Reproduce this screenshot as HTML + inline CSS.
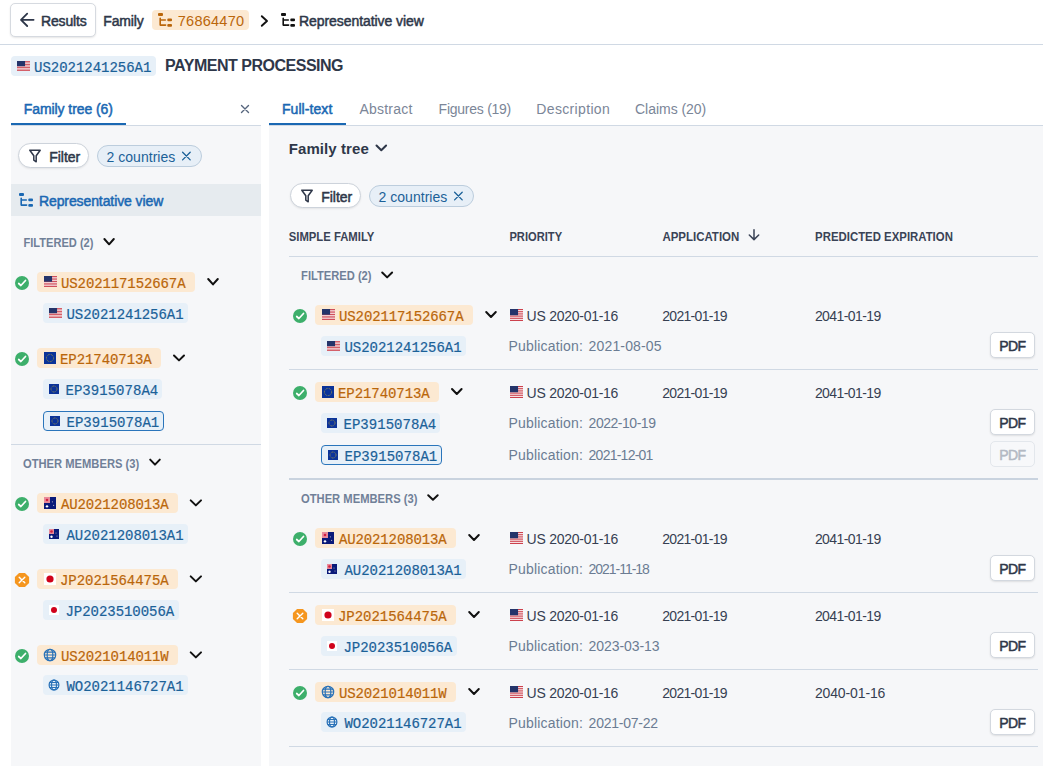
<!DOCTYPE html>
<html><head><meta charset="utf-8"><title>Family tree</title>
<style>
html,body{margin:0;padding:0;background:#fff;width:1043px;height:766px;overflow:hidden;position:relative;font-family:"Liberation Sans",sans-serif}
svg{position:absolute;left:0;top:0}
text{white-space:pre}
</style></head><body>
<div style="position:absolute;left:10px;top:3px;width:86px;height:34px;background:#fff;border-radius:5px;box-sizing:border-box;border:1px solid #d6dae0;box-shadow:0 1px 2px rgba(0,0,0,0.10);"></div>
<div style="position:absolute;left:152px;top:10px;width:97px;height:20px;background:#fce9d2;border-radius:4px;box-sizing:border-box;"></div>
<div style="position:absolute;left:0px;top:44px;width:1043px;height:1px;background:#d0d9e4;border-radius:0px;box-sizing:border-box;"></div>
<div style="position:absolute;left:11px;top:56px;width:145px;height:20px;background:#e7f0f8;border-radius:4px;box-sizing:border-box;"></div>
<div style="position:absolute;left:11px;top:125px;width:250px;height:1px;background:#d0d9e4;border-radius:0px;box-sizing:border-box;"></div>
<div style="position:absolute;left:11px;top:123px;width:115px;height:2px;background:#1a68b3;border-radius:0px;box-sizing:border-box;"></div>
<div style="position:absolute;left:269px;top:125px;width:774px;height:1px;background:#d0d9e4;border-radius:0px;box-sizing:border-box;"></div>
<div style="position:absolute;left:269px;top:123px;width:77px;height:2px;background:#1a68b3;border-radius:0px;box-sizing:border-box;"></div>
<div style="position:absolute;left:11px;top:126px;width:250px;height:640px;background:#f6f7f9;border-radius:0px;box-sizing:border-box;"></div>
<div style="position:absolute;left:18px;top:143px;width:71px;height:25px;background:#fff;border-radius:13px;box-sizing:border-box;border:1px solid #cdd3db;box-shadow:0 1px 2px rgba(0,0,0,0.08);"></div>
<div style="position:absolute;left:97px;top:145px;width:105px;height:22px;background:#e7eff7;border-radius:11px;box-sizing:border-box;border:1px solid #bccddd;"></div>
<div style="position:absolute;left:11px;top:184px;width:250px;height:32px;background:#e6ebef;border-radius:0px;box-sizing:border-box;"></div>
<div style="position:absolute;left:37px;top:272px;width:158px;height:20px;background:#fce9d2;border-radius:4px;box-sizing:border-box;"></div>
<div style="position:absolute;left:43px;top:303px;width:145px;height:20px;background:#e7f0f8;border-radius:4px;box-sizing:border-box;"></div>
<div style="position:absolute;left:37px;top:348px;width:124px;height:20px;background:#fce9d2;border-radius:4px;box-sizing:border-box;"></div>
<div style="position:absolute;left:43px;top:379px;width:119px;height:20px;background:#e7f0f8;border-radius:4px;box-sizing:border-box;"></div>
<div style="position:absolute;left:43px;top:411px;width:121px;height:20px;background:#e7f0f8;border-radius:4px;box-sizing:border-box;border:1px solid #2a75bb;"></div>
<div style="position:absolute;left:11px;top:444px;width:250px;height:1px;background:#d0d9e4;border-radius:0px;box-sizing:border-box;"></div>
<div style="position:absolute;left:37px;top:493px;width:141px;height:20px;background:#fce9d2;border-radius:4px;box-sizing:border-box;"></div>
<div style="position:absolute;left:43px;top:524px;width:145px;height:20px;background:#e7f0f8;border-radius:4px;box-sizing:border-box;"></div>
<div style="position:absolute;left:37px;top:569px;width:141px;height:20px;background:#fce9d2;border-radius:4px;box-sizing:border-box;"></div>
<div style="position:absolute;left:43px;top:600px;width:136px;height:20px;background:#e7f0f8;border-radius:4px;box-sizing:border-box;"></div>
<div style="position:absolute;left:37px;top:645px;width:141px;height:20px;background:#fce9d2;border-radius:4px;box-sizing:border-box;"></div>
<div style="position:absolute;left:43px;top:675px;width:145px;height:20px;background:#e7f0f8;border-radius:4px;box-sizing:border-box;"></div>
<div style="position:absolute;left:269px;top:126px;width:774px;height:640px;background:#f6f7f9;border-radius:0px;box-sizing:border-box;"></div>
<div style="position:absolute;left:290px;top:183px;width:71px;height:25px;background:#fff;border-radius:13px;box-sizing:border-box;border:1px solid #cdd3db;box-shadow:0 1px 2px rgba(0,0,0,0.08);"></div>
<div style="position:absolute;left:369px;top:185px;width:105px;height:22px;background:#e7eff7;border-radius:11px;box-sizing:border-box;border:1px solid #bccddd;"></div>
<div style="position:absolute;left:289px;top:256px;width:749px;height:1px;background:#d0d9e4;border-radius:0px;box-sizing:border-box;"></div>
<div style="position:absolute;left:315px;top:305px;width:158px;height:20px;background:#fce9d2;border-radius:4px;box-sizing:border-box;"></div>
<div style="position:absolute;left:321px;top:336px;width:145px;height:20px;background:#e7f0f8;border-radius:4px;box-sizing:border-box;"></div>
<div style="position:absolute;left:990px;top:332px;width:45px;height:26px;background:#fff;border-radius:5px;box-sizing:border-box;border:1px solid #d3d8df;box-shadow:0 1px 2px rgba(0,0,0,0.10);"></div>
<div style="position:absolute;left:289px;top:369px;width:749px;height:1px;background:#d0d9e4;border-radius:0px;box-sizing:border-box;"></div>
<div style="position:absolute;left:315px;top:382px;width:124px;height:20px;background:#fce9d2;border-radius:4px;box-sizing:border-box;"></div>
<div style="position:absolute;left:321px;top:413px;width:119px;height:20px;background:#e7f0f8;border-radius:4px;box-sizing:border-box;"></div>
<div style="position:absolute;left:990px;top:409px;width:45px;height:26px;background:#fff;border-radius:5px;box-sizing:border-box;border:1px solid #d3d8df;box-shadow:0 1px 2px rgba(0,0,0,0.10);"></div>
<div style="position:absolute;left:321px;top:445px;width:121px;height:20px;background:#e7f0f8;border-radius:4px;box-sizing:border-box;border:1px solid #2a75bb;"></div>
<div style="position:absolute;left:990px;top:441px;width:45px;height:26px;background:#f7f8fa;border-radius:5px;box-sizing:border-box;border:1px solid #e3e7ec;"></div>
<div style="position:absolute;left:289px;top:478px;width:749px;height:2px;background:#c9d3df;border-radius:0px;box-sizing:border-box;"></div>
<div style="position:absolute;left:315px;top:528px;width:141px;height:20px;background:#fce9d2;border-radius:4px;box-sizing:border-box;"></div>
<div style="position:absolute;left:321px;top:559px;width:145px;height:20px;background:#e7f0f8;border-radius:4px;box-sizing:border-box;"></div>
<div style="position:absolute;left:990px;top:555px;width:45px;height:26px;background:#fff;border-radius:5px;box-sizing:border-box;border:1px solid #d3d8df;box-shadow:0 1px 2px rgba(0,0,0,0.10);"></div>
<div style="position:absolute;left:289px;top:592px;width:749px;height:1px;background:#d0d9e4;border-radius:0px;box-sizing:border-box;"></div>
<div style="position:absolute;left:315px;top:605px;width:141px;height:20px;background:#fce9d2;border-radius:4px;box-sizing:border-box;"></div>
<div style="position:absolute;left:321px;top:636px;width:136px;height:20px;background:#e7f0f8;border-radius:4px;box-sizing:border-box;"></div>
<div style="position:absolute;left:990px;top:632px;width:45px;height:26px;background:#fff;border-radius:5px;box-sizing:border-box;border:1px solid #d3d8df;box-shadow:0 1px 2px rgba(0,0,0,0.10);"></div>
<div style="position:absolute;left:289px;top:669px;width:749px;height:1px;background:#d0d9e4;border-radius:0px;box-sizing:border-box;"></div>
<div style="position:absolute;left:315px;top:682px;width:141px;height:20px;background:#fce9d2;border-radius:4px;box-sizing:border-box;"></div>
<div style="position:absolute;left:321px;top:712px;width:145px;height:20px;background:#e7f0f8;border-radius:4px;box-sizing:border-box;"></div>
<div style="position:absolute;left:990px;top:709px;width:45px;height:26px;background:#fff;border-radius:5px;box-sizing:border-box;border:1px solid #d3d8df;box-shadow:0 1px 2px rgba(0,0,0,0.10);"></div>
<div style="position:absolute;left:289px;top:746px;width:749px;height:1px;background:#d0d9e4;border-radius:0px;box-sizing:border-box;"></div>
<svg width="1043" height="766" viewBox="0 0 1043 766">
<path d="M33.6 19.8H21.2M27.2 13.6L21 19.8L27.2 26" fill="none" stroke="#2e3749" stroke-width="1.8" stroke-linecap="round" stroke-linejoin="round"/>
<g transform="translate(157,12)" fill="#ba660a"><rect x="1" y="1" width="5" height="3" rx="1"/><path d="M3.2 6.2V13.1H8.6" fill="none" stroke="#ba660a" stroke-width="1.6" stroke-linecap="round" stroke-linejoin="round"/><path d="M3.6 8.0H8.4" fill="none" stroke="#ba660a" stroke-width="1.3" stroke-linecap="round"/><rect x="10.3" y="6.6" width="4.7" height="2.7" rx="1"/><rect x="10.3" y="12.1" width="4.7" height="2.7" rx="1"/></g>
<path d="M261.8 16.2L267 21L261.8 25.8" fill="none" stroke="#111" stroke-width="1.9" stroke-linecap="round" stroke-linejoin="round"/>
<g transform="translate(280,12)" fill="#111"><rect x="1" y="1" width="5" height="3" rx="1"/><path d="M3.2 6.2V13.1H8.6" fill="none" stroke="#111" stroke-width="1.6" stroke-linecap="round" stroke-linejoin="round"/><path d="M3.6 8.0H8.4" fill="none" stroke="#111" stroke-width="1.3" stroke-linecap="round"/><rect x="10.3" y="6.6" width="4.7" height="2.7" rx="1"/><rect x="10.3" y="12.1" width="4.7" height="2.7" rx="1"/></g>
<g transform="translate(17,61)"><rect width="13" height="10" fill="#fff"/><rect y="0.00" width="13" height="0.77" fill="#c8313e"/><rect y="1.54" width="13" height="0.77" fill="#c8313e"/><rect y="3.08" width="13" height="0.77" fill="#c8313e"/><rect y="4.62" width="13" height="0.77" fill="#c8313e"/><rect y="6.15" width="13" height="0.77" fill="#c8313e"/><rect y="7.69" width="13" height="0.77" fill="#c8313e"/><rect y="9.23" width="13" height="0.77" fill="#c8313e"/><rect width="8.06" height="5.20" fill="#24346a"/></g>
<path d="M241.5 105.5L248.5 112.5M248.5 105.5L241.5 112.5" stroke="#56657d" stroke-width="1.4" stroke-linecap="round"/>
<path d="M29.8 150.20000000000002H40.2L36.2 155.8V161.8L33.8 160.20000000000002V155.8Z" fill="none" stroke="#2e3749" stroke-width="1.5" stroke-linejoin="round"/>
<path d="M182.6 152.3L190.2 159.9M190.2 152.3L182.6 159.9" stroke="#1b6198" stroke-width="1.3" stroke-linecap="round"/>
<g transform="translate(18,192)" fill="#1a68b3"><rect x="1" y="1" width="5" height="3" rx="1"/><path d="M3.2 6.2V13.1H8.6" fill="none" stroke="#1a68b3" stroke-width="1.6" stroke-linecap="round" stroke-linejoin="round"/><path d="M3.6 8.0H8.4" fill="none" stroke="#1a68b3" stroke-width="1.3" stroke-linecap="round"/><rect x="10.3" y="6.6" width="4.7" height="2.7" rx="1"/><rect x="10.3" y="12.1" width="4.7" height="2.7" rx="1"/></g>
<path d="M104.4 239L109.1 244.3L113.8 239" fill="none" stroke="#111" stroke-width="2" stroke-linecap="round" stroke-linejoin="round"/>
<circle cx="22" cy="283" r="7" fill="#3daf6b"/><path d="M18.7 283.5L20.9 285.5L25.5 280.5" fill="none" stroke="#fff" stroke-width="1.7" stroke-linecap="round" stroke-linejoin="round"/>
<g transform="translate(44,276)"><rect width="13" height="11" fill="#fff"/><rect y="0.00" width="13" height="0.85" fill="#c8313e"/><rect y="1.69" width="13" height="0.85" fill="#c8313e"/><rect y="3.38" width="13" height="0.85" fill="#c8313e"/><rect y="5.08" width="13" height="0.85" fill="#c8313e"/><rect y="6.77" width="13" height="0.85" fill="#c8313e"/><rect y="8.46" width="13" height="0.85" fill="#c8313e"/><rect y="10.15" width="13" height="0.85" fill="#c8313e"/><rect width="8.06" height="5.72" fill="#24346a"/></g>
<path d="M208.2 279L213.0 284.4L217.8 279" fill="none" stroke="#111" stroke-width="2" stroke-linecap="round" stroke-linejoin="round"/>
<g transform="translate(49,308)"><rect width="13" height="10" fill="#fff"/><rect y="0.00" width="13" height="0.77" fill="#c8313e"/><rect y="1.54" width="13" height="0.77" fill="#c8313e"/><rect y="3.08" width="13" height="0.77" fill="#c8313e"/><rect y="4.62" width="13" height="0.77" fill="#c8313e"/><rect y="6.15" width="13" height="0.77" fill="#c8313e"/><rect y="7.69" width="13" height="0.77" fill="#c8313e"/><rect y="9.23" width="13" height="0.77" fill="#c8313e"/><rect width="8.06" height="5.20" fill="#24346a"/></g>
<circle cx="22" cy="359" r="7" fill="#3daf6b"/><path d="M18.7 359.5L20.9 361.5L25.5 356.5" fill="none" stroke="#fff" stroke-width="1.7" stroke-linecap="round" stroke-linejoin="round"/>
<g transform="translate(44,352)"><rect width="12" height="12" fill="#0b3399"/><circle cx="6.0" cy="6.0" r="3.60" fill="none" stroke="#d4b628" stroke-width="0.7" stroke-dasharray="0.8 0.8"/></g>
<path d="M174 355.5L179.0 360.4L184 355.5" fill="none" stroke="#111" stroke-width="2" stroke-linecap="round" stroke-linejoin="round"/>
<g transform="translate(49,384)"><rect width="10" height="10" fill="#0b3399"/><circle cx="5.0" cy="5.0" r="3.00" fill="none" stroke="#d4b628" stroke-width="0.7" stroke-dasharray="0.8 0.8"/></g>
<g transform="translate(50,416)"><rect width="10" height="10" fill="#0b3399"/><circle cx="5.0" cy="5.0" r="3.00" fill="none" stroke="#d4b628" stroke-width="0.7" stroke-dasharray="0.8 0.8"/></g>
<path d="M150.2 459.6L155.0 464.6L159.8 459.6" fill="none" stroke="#111" stroke-width="2" stroke-linecap="round" stroke-linejoin="round"/>
<circle cx="22" cy="504" r="7" fill="#3daf6b"/><path d="M18.7 504.5L20.9 506.5L25.5 501.5" fill="none" stroke="#fff" stroke-width="1.7" stroke-linecap="round" stroke-linejoin="round"/>
<g transform="translate(44,497)"><rect width="12" height="12" fill="#0a1a7a"/><rect width="6.0" height="6.0" fill="#e88a9a"/><circle cx="3.0" cy="3.0" r="1.3" fill="#d02040"/><circle cx="3.0" cy="9.36" r="1.2" fill="#fff"/><circle cx="8.399999999999999" cy="4.800000000000001" r="0.6" fill="#aab"/><circle cx="9.600000000000001" cy="8.399999999999999" r="0.6" fill="#aab"/></g>
<path d="M190.7 500.4L195.85 505.4L201 500.4" fill="none" stroke="#111" stroke-width="2" stroke-linecap="round" stroke-linejoin="round"/>
<g transform="translate(49,529)"><rect width="10" height="10" fill="#0a1a7a"/><rect width="5.0" height="5.0" fill="#e88a9a"/><circle cx="2.5" cy="2.5" r="1.3" fill="#d02040"/><circle cx="2.5" cy="7.800000000000001" r="1.2" fill="#fff"/><circle cx="7.0" cy="4.0" r="0.6" fill="#aab"/><circle cx="8.0" cy="7.0" r="0.6" fill="#aab"/></g>
<polygon points="29.10,582.94 24.94,587.10 19.06,587.10 14.90,582.94 14.90,577.06 19.06,572.90 24.94,572.90 29.10,577.06" fill="#f5961f"/><path d="M19.2 577.2L24.8 582.8M24.8 577.2L19.2 582.8" stroke="#fff" stroke-width="1.4" stroke-linecap="round"/>
<g transform="translate(44,573)"><rect width="12" height="12" fill="#fff"/><circle cx="6.0" cy="6.0" r="3.60" fill="#d0021b"/></g>
<path d="M190.7 576.4L195.85 581.4L201 576.4" fill="none" stroke="#111" stroke-width="2" stroke-linecap="round" stroke-linejoin="round"/>
<g transform="translate(49,605)"><rect width="10" height="10" fill="#fff"/><circle cx="5.0" cy="5.0" r="3.00" fill="#d0021b"/></g>
<circle cx="22" cy="656" r="7" fill="#3daf6b"/><path d="M18.7 656.5L20.9 658.5L25.5 653.5" fill="none" stroke="#fff" stroke-width="1.7" stroke-linecap="round" stroke-linejoin="round"/>
<g fill="none" stroke="#2a72b8" stroke-width="1.2"><circle cx="50" cy="655" r="5.7"/><ellipse cx="50" cy="655" rx="2.83" ry="5.7"/><path d="M44.300000000000004 655H55.699999999999996M44.65 652.16H55.35M44.65 657.84H55.35"/></g>
<path d="M190.7 652.4L195.85 657.4L201 652.4" fill="none" stroke="#111" stroke-width="2" stroke-linecap="round" stroke-linejoin="round"/>
<g fill="none" stroke="#2a72b8" stroke-width="1.2"><circle cx="54" cy="685" r="4.9"/><ellipse cx="54" cy="685" rx="2.48" ry="4.9"/><path d="M49.1 685H58.9M49.33 682.52H58.67M49.33 687.48H58.67"/></g>
<path d="M376.5 145.5L381.3 150.3L386.1 145.5" fill="none" stroke="#2e3749" stroke-width="2" stroke-linecap="round" stroke-linejoin="round"/>
<path d="M301.8 190.20000000000002H312.2L308.2 195.8V201.8L305.8 200.20000000000002V195.8Z" fill="none" stroke="#2e3749" stroke-width="1.5" stroke-linejoin="round"/>
<path d="M454.6 192.3L462.2 199.9M462.2 192.3L454.6 199.9" stroke="#1b6198" stroke-width="1.3" stroke-linecap="round"/>
<path d="M754 229.8V239.6M749.3 235L754 239.6L758.7 235" fill="none" stroke="#3a4356" stroke-width="1.5" stroke-linecap="round" stroke-linejoin="round"/>
<path d="M382.2 272.5L387.15 277.4L392.1 272.5" fill="none" stroke="#111" stroke-width="2" stroke-linecap="round" stroke-linejoin="round"/>
<circle cx="300" cy="316" r="7" fill="#3daf6b"/><path d="M296.7 316.5L298.9 318.5L303.5 313.5" fill="none" stroke="#fff" stroke-width="1.7" stroke-linecap="round" stroke-linejoin="round"/>
<g transform="translate(322,309)"><rect width="13" height="11" fill="#fff"/><rect y="0.00" width="13" height="0.85" fill="#c8313e"/><rect y="1.69" width="13" height="0.85" fill="#c8313e"/><rect y="3.38" width="13" height="0.85" fill="#c8313e"/><rect y="5.08" width="13" height="0.85" fill="#c8313e"/><rect y="6.77" width="13" height="0.85" fill="#c8313e"/><rect y="8.46" width="13" height="0.85" fill="#c8313e"/><rect y="10.15" width="13" height="0.85" fill="#c8313e"/><rect width="8.06" height="5.72" fill="#24346a"/></g>
<path d="M486.2 312L491.0 317L495.8 312" fill="none" stroke="#111" stroke-width="2" stroke-linecap="round" stroke-linejoin="round"/>
<g transform="translate(510,309)"><rect width="13" height="12" fill="#fff"/><rect y="0.00" width="13" height="0.92" fill="#c8313e"/><rect y="1.85" width="13" height="0.92" fill="#c8313e"/><rect y="3.69" width="13" height="0.92" fill="#c8313e"/><rect y="5.54" width="13" height="0.92" fill="#c8313e"/><rect y="7.38" width="13" height="0.92" fill="#c8313e"/><rect y="9.23" width="13" height="0.92" fill="#c8313e"/><rect y="11.08" width="13" height="0.92" fill="#c8313e"/><rect width="8.06" height="6.24" fill="#24346a"/></g>
<g transform="translate(327,341)"><rect width="13" height="10" fill="#fff"/><rect y="0.00" width="13" height="0.77" fill="#c8313e"/><rect y="1.54" width="13" height="0.77" fill="#c8313e"/><rect y="3.08" width="13" height="0.77" fill="#c8313e"/><rect y="4.62" width="13" height="0.77" fill="#c8313e"/><rect y="6.15" width="13" height="0.77" fill="#c8313e"/><rect y="7.69" width="13" height="0.77" fill="#c8313e"/><rect y="9.23" width="13" height="0.77" fill="#c8313e"/><rect width="8.06" height="5.20" fill="#24346a"/></g>
<circle cx="300" cy="393" r="7" fill="#3daf6b"/><path d="M296.7 393.5L298.9 395.5L303.5 390.5" fill="none" stroke="#fff" stroke-width="1.7" stroke-linecap="round" stroke-linejoin="round"/>
<g transform="translate(322,386)"><rect width="12" height="12" fill="#0b3399"/><circle cx="6.0" cy="6.0" r="3.60" fill="none" stroke="#d4b628" stroke-width="0.7" stroke-dasharray="0.8 0.8"/></g>
<path d="M452 389L456.8 394L461.6 389" fill="none" stroke="#111" stroke-width="2" stroke-linecap="round" stroke-linejoin="round"/>
<g transform="translate(510,386)"><rect width="13" height="12" fill="#fff"/><rect y="0.00" width="13" height="0.92" fill="#c8313e"/><rect y="1.85" width="13" height="0.92" fill="#c8313e"/><rect y="3.69" width="13" height="0.92" fill="#c8313e"/><rect y="5.54" width="13" height="0.92" fill="#c8313e"/><rect y="7.38" width="13" height="0.92" fill="#c8313e"/><rect y="9.23" width="13" height="0.92" fill="#c8313e"/><rect y="11.08" width="13" height="0.92" fill="#c8313e"/><rect width="8.06" height="6.24" fill="#24346a"/></g>
<g transform="translate(327,418)"><rect width="10" height="10" fill="#0b3399"/><circle cx="5.0" cy="5.0" r="3.00" fill="none" stroke="#d4b628" stroke-width="0.7" stroke-dasharray="0.8 0.8"/></g>
<g transform="translate(328,450)"><rect width="10" height="10" fill="#0b3399"/><circle cx="5.0" cy="5.0" r="3.00" fill="none" stroke="#d4b628" stroke-width="0.7" stroke-dasharray="0.8 0.8"/></g>
<path d="M428.2 495.3L432.95 499.7L437.7 495.3" fill="none" stroke="#111" stroke-width="2" stroke-linecap="round" stroke-linejoin="round"/>
<circle cx="300" cy="539" r="7" fill="#3daf6b"/><path d="M296.7 539.5L298.9 541.5L303.5 536.5" fill="none" stroke="#fff" stroke-width="1.7" stroke-linecap="round" stroke-linejoin="round"/>
<g transform="translate(322,532)"><rect width="12" height="12" fill="#0a1a7a"/><rect width="6.0" height="6.0" fill="#e88a9a"/><circle cx="3.0" cy="3.0" r="1.3" fill="#d02040"/><circle cx="3.0" cy="9.36" r="1.2" fill="#fff"/><circle cx="8.399999999999999" cy="4.800000000000001" r="0.6" fill="#aab"/><circle cx="9.600000000000001" cy="8.399999999999999" r="0.6" fill="#aab"/></g>
<path d="M469.2 535L474.0 540L478.8 535" fill="none" stroke="#111" stroke-width="2" stroke-linecap="round" stroke-linejoin="round"/>
<g transform="translate(510,532)"><rect width="13" height="12" fill="#fff"/><rect y="0.00" width="13" height="0.92" fill="#c8313e"/><rect y="1.85" width="13" height="0.92" fill="#c8313e"/><rect y="3.69" width="13" height="0.92" fill="#c8313e"/><rect y="5.54" width="13" height="0.92" fill="#c8313e"/><rect y="7.38" width="13" height="0.92" fill="#c8313e"/><rect y="9.23" width="13" height="0.92" fill="#c8313e"/><rect y="11.08" width="13" height="0.92" fill="#c8313e"/><rect width="8.06" height="6.24" fill="#24346a"/></g>
<g transform="translate(327,564)"><rect width="10" height="10" fill="#0a1a7a"/><rect width="5.0" height="5.0" fill="#e88a9a"/><circle cx="2.5" cy="2.5" r="1.3" fill="#d02040"/><circle cx="2.5" cy="7.800000000000001" r="1.2" fill="#fff"/><circle cx="7.0" cy="4.0" r="0.6" fill="#aab"/><circle cx="8.0" cy="7.0" r="0.6" fill="#aab"/></g>
<polygon points="307.10,618.94 302.94,623.10 297.06,623.10 292.90,618.94 292.90,613.06 297.06,608.90 302.94,608.90 307.10,613.06" fill="#f5961f"/><path d="M297.2 613.2L302.8 618.8M302.8 613.2L297.2 618.8" stroke="#fff" stroke-width="1.4" stroke-linecap="round"/>
<g transform="translate(322,609)"><rect width="12" height="12" fill="#fff"/><circle cx="6.0" cy="6.0" r="3.60" fill="#d0021b"/></g>
<path d="M469.2 612L474.0 617L478.8 612" fill="none" stroke="#111" stroke-width="2" stroke-linecap="round" stroke-linejoin="round"/>
<g transform="translate(510,609)"><rect width="13" height="12" fill="#fff"/><rect y="0.00" width="13" height="0.92" fill="#c8313e"/><rect y="1.85" width="13" height="0.92" fill="#c8313e"/><rect y="3.69" width="13" height="0.92" fill="#c8313e"/><rect y="5.54" width="13" height="0.92" fill="#c8313e"/><rect y="7.38" width="13" height="0.92" fill="#c8313e"/><rect y="9.23" width="13" height="0.92" fill="#c8313e"/><rect y="11.08" width="13" height="0.92" fill="#c8313e"/><rect width="8.06" height="6.24" fill="#24346a"/></g>
<g transform="translate(327,641)"><rect width="10" height="10" fill="#fff"/><circle cx="5.0" cy="5.0" r="3.00" fill="#d0021b"/></g>
<circle cx="300" cy="693" r="7" fill="#3daf6b"/><path d="M296.7 693.5L298.9 695.5L303.5 690.5" fill="none" stroke="#fff" stroke-width="1.7" stroke-linecap="round" stroke-linejoin="round"/>
<g fill="none" stroke="#2a72b8" stroke-width="1.2"><circle cx="328" cy="692" r="5.7"/><ellipse cx="328" cy="692" rx="2.83" ry="5.7"/><path d="M322.3 692H333.7M322.64 689.16H333.36M322.64 694.84H333.36"/></g>
<path d="M469.2 689L474.0 694L478.8 689" fill="none" stroke="#111" stroke-width="2" stroke-linecap="round" stroke-linejoin="round"/>
<g transform="translate(510,686)"><rect width="13" height="12" fill="#fff"/><rect y="0.00" width="13" height="0.92" fill="#c8313e"/><rect y="1.85" width="13" height="0.92" fill="#c8313e"/><rect y="3.69" width="13" height="0.92" fill="#c8313e"/><rect y="5.54" width="13" height="0.92" fill="#c8313e"/><rect y="7.38" width="13" height="0.92" fill="#c8313e"/><rect y="9.23" width="13" height="0.92" fill="#c8313e"/><rect y="11.08" width="13" height="0.92" fill="#c8313e"/><rect width="8.06" height="6.24" fill="#24346a"/></g>
<g fill="none" stroke="#2a72b8" stroke-width="1.2"><circle cx="332" cy="722" r="4.9"/><ellipse cx="332" cy="722" rx="2.48" ry="4.9"/><path d="M327.1 722H336.9M327.32 719.52H336.68M327.32 724.48H336.68"/></g>
<text x="40.95" y="25.80" font-family="Liberation Sans" font-size="14" font-weight="400" fill="#2e3749" letter-spacing="-0.130" stroke="#2e3749" stroke-width="0.5" stroke-linejoin="round" >Results</text>
<text x="103.25" y="25.80" font-family="Liberation Sans" font-size="14" font-weight="400" fill="#2e3749" letter-spacing="-0.144" stroke="#2e3749" stroke-width="0.5" stroke-linejoin="round" >Family</text>
<text x="177.80" y="25.80" font-family="Liberation Sans" font-size="14.5" font-weight="400" fill="#ba660a" letter-spacing="0.250" >76864470</text>
<text x="299.05" y="25.80" font-family="Liberation Sans" font-size="14" font-weight="400" fill="#2e3749" letter-spacing="-0.070" stroke="#2e3749" stroke-width="0.5" stroke-linejoin="round" >Representative view</text>
<text x="34.00" y="72.00" font-family="Liberation Mono" font-size="14" font-weight="400" fill="#1b6198" letter-spacing="-0.017" stroke="#1b6198" stroke-width="0.2" >US2021241256A1</text>
<text x="165.10" y="70.80" font-family="Liberation Sans" font-size="16" font-weight="700" fill="#2e3749" letter-spacing="-0.486" >PAYMENT PROCESSING</text>
<text x="23.75" y="114.00" font-family="Liberation Sans" font-size="14" font-weight="400" fill="#1a68b3" letter-spacing="-0.077" stroke="#1a68b3" stroke-width="0.5" stroke-linejoin="round" >Family tree (6)</text>
<text x="281.95" y="114.00" font-family="Liberation Sans" font-size="14" font-weight="400" fill="#1a68b3" letter-spacing="0.075" stroke="#1a68b3" stroke-width="0.5" stroke-linejoin="round" >Full-text</text>
<text x="359.40" y="114.00" font-family="Liberation Sans" font-size="14" font-weight="400" fill="#7b8698" letter-spacing="0.234" >Abstract</text>
<text x="438.60" y="114.00" font-family="Liberation Sans" font-size="14" font-weight="400" fill="#7b8698" letter-spacing="-0.255" >Figures (19)</text>
<text x="536.30" y="114.00" font-family="Liberation Sans" font-size="14" font-weight="400" fill="#7b8698" letter-spacing="0.346" >Description</text>
<text x="635.00" y="114.00" font-family="Liberation Sans" font-size="14" font-weight="400" fill="#7b8698" letter-spacing="-0.030" >Claims (20)</text>
<text x="49.15" y="161.80" font-family="Liberation Sans" font-size="14" font-weight="400" fill="#2e3749" letter-spacing="-0.010" stroke="#2e3749" stroke-width="0.5" stroke-linejoin="round" >Filter</text>
<text x="106.50" y="161.80" font-family="Liberation Sans" font-size="14" font-weight="400" fill="#1b6198" letter-spacing="0.032" >2 countries</text>
<text x="38.95" y="205.60" font-family="Liberation Sans" font-size="14" font-weight="400" fill="#1a68b3" letter-spacing="-0.097" stroke="#1a68b3" stroke-width="0.5" stroke-linejoin="round" >Representative view</text>
<text transform="translate(23.40 247.10) scale(0.8550 1)" x="0.00" y="0" font-family="Liberation Sans" font-size="13" font-weight="700" fill="#708098" >FILTERED (2)</text>
<text x="61.00" y="288.00" font-family="Liberation Mono" font-size="14" font-weight="400" fill="#ba660a" letter-spacing="-0.105" stroke="#ba660a" stroke-width="0.2" >US202117152667A</text>
<text x="66.50" y="318.80" font-family="Liberation Mono" font-size="14" font-weight="400" fill="#1b6198" letter-spacing="-0.040" stroke="#1b6198" stroke-width="0.2" >US2021241256A1</text>
<text x="60.00" y="364.00" font-family="Liberation Mono" font-size="14" font-weight="400" fill="#ba660a" letter-spacing="-0.066" stroke="#ba660a" stroke-width="0.2" >EP21740713A</text>
<text x="65.50" y="394.80" font-family="Liberation Mono" font-size="14" font-weight="400" fill="#1b6198" letter-spacing="0.034" stroke="#1b6198" stroke-width="0.2" >EP3915078A4</text>
<text x="66.50" y="426.80" font-family="Liberation Mono" font-size="14" font-weight="400" fill="#1b6198" letter-spacing="0.034" stroke="#1b6198" stroke-width="0.2" >EP3915078A1</text>
<text transform="translate(23.00 468.00) scale(0.8610 1)" x="0.00" y="0" font-family="Liberation Sans" font-size="13" font-weight="700" fill="#708098" >OTHER MEMBERS (3)</text>
<text x="61.00" y="509.00" font-family="Liberation Mono" font-size="14" font-weight="400" fill="#ba660a" letter-spacing="-0.131" stroke="#ba660a" stroke-width="0.2" >AU2021208013A</text>
<text x="66.50" y="539.80" font-family="Liberation Mono" font-size="14" font-weight="400" fill="#1b6198" letter-spacing="-0.040" stroke="#1b6198" stroke-width="0.2" >AU2021208013A1</text>
<text x="60.00" y="585.00" font-family="Liberation Mono" font-size="14" font-weight="400" fill="#ba660a" letter-spacing="-0.047" stroke="#ba660a" stroke-width="0.2" >JP2021564475A</text>
<text x="65.50" y="615.80" font-family="Liberation Mono" font-size="14" font-weight="400" fill="#1b6198" letter-spacing="-0.047" stroke="#1b6198" stroke-width="0.2" >JP2023510056A</text>
<text x="61.00" y="661.00" font-family="Liberation Mono" font-size="14" font-weight="400" fill="#ba660a" letter-spacing="-0.131" stroke="#ba660a" stroke-width="0.2" >US2021014011W</text>
<text x="66.50" y="690.80" font-family="Liberation Mono" font-size="14" font-weight="400" fill="#1b6198" letter-spacing="-0.040" stroke="#1b6198" stroke-width="0.2" >WO2021146727A1</text>
<text x="288.80" y="153.70" font-family="Liberation Sans" font-size="15" font-weight="700" fill="#2e3749" letter-spacing="0.074" >Family tree</text>
<text x="321.15" y="201.80" font-family="Liberation Sans" font-size="14" font-weight="400" fill="#2e3749" letter-spacing="-0.010" stroke="#2e3749" stroke-width="0.5" stroke-linejoin="round" >Filter</text>
<text x="378.50" y="201.80" font-family="Liberation Sans" font-size="14" font-weight="400" fill="#1b6198" letter-spacing="0.032" >2 countries</text>
<text transform="translate(288.70 241.30) scale(0.8704 1)" x="0.00" y="0" font-family="Liberation Sans" font-size="13" font-weight="700" fill="#3a4356" >SIMPLE FAMILY</text>
<text transform="translate(509.40 241.30) scale(0.8587 1)" x="0.00" y="0" font-family="Liberation Sans" font-size="13" font-weight="700" fill="#3a4356" >PRIORITY</text>
<text transform="translate(662.40 241.30) scale(0.8829 1)" x="0.00" y="0" font-family="Liberation Sans" font-size="13" font-weight="700" fill="#3a4356" >APPLICATION</text>
<text transform="translate(815.10 241.30) scale(0.8767 1)" x="0.00" y="0" font-family="Liberation Sans" font-size="13" font-weight="700" fill="#3a4356" >PREDICTED EXPIRATION</text>
<text transform="translate(301.10 280.20) scale(0.8586 1)" x="0.00" y="0" font-family="Liberation Sans" font-size="13" font-weight="700" fill="#708098" >FILTERED (2)</text>
<text x="339.00" y="321.00" font-family="Liberation Mono" font-size="14" font-weight="400" fill="#ba660a" letter-spacing="-0.105" stroke="#ba660a" stroke-width="0.2" >US202117152667A</text>
<text x="526.60" y="320.80" font-family="Liberation Sans" font-size="14" font-weight="400" fill="#363f52" letter-spacing="-0.264" >US 2020-01-16</text>
<text x="662.20" y="320.80" font-family="Liberation Sans" font-size="14" font-weight="400" fill="#363f52" letter-spacing="-0.692" >2021-01-19</text>
<text x="814.90" y="320.80" font-family="Liberation Sans" font-size="14" font-weight="400" fill="#363f52" letter-spacing="-0.581" >2041-01-19</text>
<text x="344.50" y="351.80" font-family="Liberation Mono" font-size="14" font-weight="400" fill="#1b6198" letter-spacing="-0.040" stroke="#1b6198" stroke-width="0.2" >US2021241256A1</text>
<text x="508.50" y="350.90" font-family="Liberation Sans" font-size="14" font-weight="400" fill="#6b7c93" letter-spacing="0.183" >Publication:</text>
<text x="588.60" y="350.90" font-family="Liberation Sans" font-size="14" font-weight="400" fill="#6b7c93" letter-spacing="0.153" >2021-08-05</text>
<text x="999.25" y="351.40" font-family="Liberation Sans" font-size="14" font-weight="400" fill="#2e3749" letter-spacing="-0.624" stroke="#2e3749" stroke-width="0.5" stroke-linejoin="round" >PDF</text>
<text x="338.00" y="398.00" font-family="Liberation Mono" font-size="14" font-weight="400" fill="#ba660a" letter-spacing="-0.066" stroke="#ba660a" stroke-width="0.2" >EP21740713A</text>
<text x="526.60" y="397.80" font-family="Liberation Sans" font-size="14" font-weight="400" fill="#363f52" letter-spacing="-0.264" >US 2020-01-16</text>
<text x="662.20" y="397.80" font-family="Liberation Sans" font-size="14" font-weight="400" fill="#363f52" letter-spacing="-0.692" >2021-01-19</text>
<text x="814.90" y="397.80" font-family="Liberation Sans" font-size="14" font-weight="400" fill="#363f52" letter-spacing="-0.581" >2041-01-19</text>
<text x="343.50" y="428.80" font-family="Liberation Mono" font-size="14" font-weight="400" fill="#1b6198" letter-spacing="0.034" stroke="#1b6198" stroke-width="0.2" >EP3915078A4</text>
<text x="508.50" y="427.90" font-family="Liberation Sans" font-size="14" font-weight="400" fill="#6b7c93" letter-spacing="0.183" >Publication:</text>
<text x="588.60" y="427.90" font-family="Liberation Sans" font-size="14" font-weight="400" fill="#6b7c93" letter-spacing="-0.470" >2022-10-19</text>
<text x="999.25" y="428.40" font-family="Liberation Sans" font-size="14" font-weight="400" fill="#2e3749" letter-spacing="-0.624" stroke="#2e3749" stroke-width="0.5" stroke-linejoin="round" >PDF</text>
<text x="344.50" y="460.80" font-family="Liberation Mono" font-size="14" font-weight="400" fill="#1b6198" letter-spacing="0.034" stroke="#1b6198" stroke-width="0.2" >EP3915078A1</text>
<text x="508.50" y="459.90" font-family="Liberation Sans" font-size="14" font-weight="400" fill="#6b7c93" letter-spacing="0.183" >Publication:</text>
<text x="588.60" y="459.90" font-family="Liberation Sans" font-size="14" font-weight="400" fill="#6b7c93" letter-spacing="-0.759" >2021-12-01</text>
<text x="999.25" y="460.40" font-family="Liberation Sans" font-size="14" font-weight="400" fill="#b3b9c3" letter-spacing="-0.624" stroke="#b3b9c3" stroke-width="0.5" stroke-linejoin="round" >PDF</text>
<text transform="translate(301.00 503.00) scale(0.8632 1)" x="0.00" y="0" font-family="Liberation Sans" font-size="13" font-weight="700" fill="#708098" >OTHER MEMBERS (3)</text>
<text x="339.00" y="544.00" font-family="Liberation Mono" font-size="14" font-weight="400" fill="#ba660a" letter-spacing="-0.131" stroke="#ba660a" stroke-width="0.2" >AU2021208013A</text>
<text x="526.60" y="543.80" font-family="Liberation Sans" font-size="14" font-weight="400" fill="#363f52" letter-spacing="-0.264" >US 2020-01-16</text>
<text x="662.20" y="543.80" font-family="Liberation Sans" font-size="14" font-weight="400" fill="#363f52" letter-spacing="-0.692" >2021-01-19</text>
<text x="814.90" y="543.80" font-family="Liberation Sans" font-size="14" font-weight="400" fill="#363f52" letter-spacing="-0.581" >2041-01-19</text>
<text x="344.50" y="574.80" font-family="Liberation Mono" font-size="14" font-weight="400" fill="#1b6198" letter-spacing="-0.040" stroke="#1b6198" stroke-width="0.2" >AU2021208013A1</text>
<text x="508.50" y="573.90" font-family="Liberation Sans" font-size="14" font-weight="400" fill="#6b7c93" letter-spacing="0.183" >Publication:</text>
<text x="588.60" y="573.90" font-family="Liberation Sans" font-size="14" font-weight="400" fill="#6b7c93" letter-spacing="-1.043" >2021-11-18</text>
<text x="999.25" y="574.40" font-family="Liberation Sans" font-size="14" font-weight="400" fill="#2e3749" letter-spacing="-0.624" stroke="#2e3749" stroke-width="0.5" stroke-linejoin="round" >PDF</text>
<text x="338.00" y="621.00" font-family="Liberation Mono" font-size="14" font-weight="400" fill="#ba660a" letter-spacing="-0.047" stroke="#ba660a" stroke-width="0.2" >JP2021564475A</text>
<text x="526.60" y="620.80" font-family="Liberation Sans" font-size="14" font-weight="400" fill="#363f52" letter-spacing="-0.264" >US 2020-01-16</text>
<text x="662.20" y="620.80" font-family="Liberation Sans" font-size="14" font-weight="400" fill="#363f52" letter-spacing="-0.692" >2021-01-19</text>
<text x="814.90" y="620.80" font-family="Liberation Sans" font-size="14" font-weight="400" fill="#363f52" letter-spacing="-0.581" >2041-01-19</text>
<text x="343.50" y="651.80" font-family="Liberation Mono" font-size="14" font-weight="400" fill="#1b6198" letter-spacing="-0.047" stroke="#1b6198" stroke-width="0.2" >JP2023510056A</text>
<text x="508.50" y="650.90" font-family="Liberation Sans" font-size="14" font-weight="400" fill="#6b7c93" letter-spacing="0.183" >Publication:</text>
<text x="588.60" y="650.90" font-family="Liberation Sans" font-size="14" font-weight="400" fill="#6b7c93" letter-spacing="-0.070" >2023-03-13</text>
<text x="999.25" y="651.40" font-family="Liberation Sans" font-size="14" font-weight="400" fill="#2e3749" letter-spacing="-0.624" stroke="#2e3749" stroke-width="0.5" stroke-linejoin="round" >PDF</text>
<text x="339.00" y="698.00" font-family="Liberation Mono" font-size="14" font-weight="400" fill="#ba660a" letter-spacing="-0.131" stroke="#ba660a" stroke-width="0.2" >US2021014011W</text>
<text x="526.60" y="697.80" font-family="Liberation Sans" font-size="14" font-weight="400" fill="#363f52" letter-spacing="-0.264" >US 2020-01-16</text>
<text x="662.20" y="697.80" font-family="Liberation Sans" font-size="14" font-weight="400" fill="#363f52" letter-spacing="-0.692" >2021-01-19</text>
<text x="814.90" y="697.80" font-family="Liberation Sans" font-size="14" font-weight="400" fill="#363f52" letter-spacing="-0.125" >2040-01-16</text>
<text x="344.50" y="727.80" font-family="Liberation Mono" font-size="14" font-weight="400" fill="#1b6198" letter-spacing="-0.040" stroke="#1b6198" stroke-width="0.2" >WO2021146727A1</text>
<text x="508.50" y="727.90" font-family="Liberation Sans" font-size="14" font-weight="400" fill="#6b7c93" letter-spacing="0.183" >Publication:</text>
<text x="588.60" y="727.90" font-family="Liberation Sans" font-size="14" font-weight="400" fill="#6b7c93" letter-spacing="-0.247" >2021-07-22</text>
<text x="999.25" y="728.40" font-family="Liberation Sans" font-size="14" font-weight="400" fill="#2e3749" letter-spacing="-0.624" stroke="#2e3749" stroke-width="0.5" stroke-linejoin="round" >PDF</text>
</svg>
</body></html>
